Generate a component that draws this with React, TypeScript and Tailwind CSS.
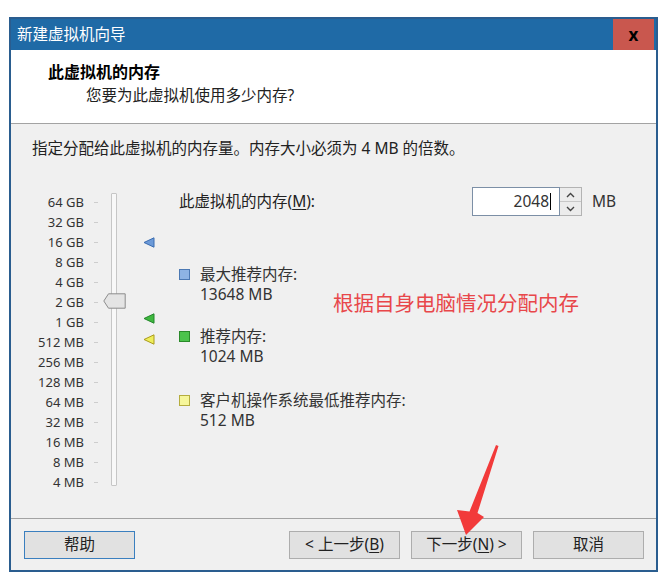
import React from "react";

const sizes = [
  "64 GB", "32 GB", "16 GB", "8 GB", "4 GB", "2 GB", "1 GB", "512 MB",
  "256 MB", "128 MB", "64 MB", "32 MB", "16 MB", "8 MB", "4 MB",
];

function Marker({ fill, stroke }: { fill: string; stroke: string }) {
  return (
    <svg width="12" height="11" viewBox="0 0 12 11">
      <path d="M1 5.5 L11 0.8 L11 10.2 Z" fill={fill} stroke={stroke} strokeWidth="1" strokeLinejoin="round" />
    </svg>
  );
}

function Legend({ color, border, title, value }: { color: string; border: string; title: string; value: string }) {
  return (
    <div className="flex">
      <div className="mt-[5px] h-[11px] w-[11px] border" style={{ background: color, borderColor: border }} />
      <div className="ml-[10px] text-[15.5px] leading-[20px] text-[#333]">
        <div>{title}</div>
        <div>{value}</div>
      </div>
    </div>
  );
}

function Button({ children, focus }: { children: React.ReactNode; focus?: boolean }) {
  return (
    <div
      className={
        "flex h-[28px] w-[111px] items-center justify-center border bg-[#e1e1e1] text-[15.5px] text-[#222] " +
        (focus ? "border-[#3a7fbf]" : "border-[#adadad]")
      }
    >
      {children}
    </div>
  );
}

export default function App() {
  return (
    <div className="relative min-h-screen bg-white pl-[9px] pt-[17px] font-['Noto_Sans','Noto_Sans_CJK_SC',sans-serif]">
      <div className="relative flex w-[649px] flex-col border-2 border-[#2a5d8f] bg-[#f0f0f0]">
        {/* title bar */}
        <div className="flex h-[31px] items-center justify-between bg-[#1f6aa6]">
          <span className="pl-[6px] text-[15.5px] text-white">新建虚拟机向导</span>
          <div className="mr-[2px] flex h-full w-[41px] items-center justify-center bg-[#c9574e] text-[17px] font-bold text-black">
            x
          </div>
        </div>

        {/* header */}
        <div className="h-[74px] border-b border-[#a3a3a3] bg-white">
          <div className="pl-[37px] pt-[12px] text-[16px] font-bold leading-[20px] text-black">此虚拟机的内存</div>
          <div className="mt-[3px] pl-[75px] text-[15.5px] leading-[20px] text-[#222]">您要为此虚拟机使用多少内存?</div>
        </div>

        {/* content */}
        <div className="h-[394px] pl-[21px] pt-[14px]">
          <div className="text-[15.5px] leading-[20px] text-[#222]">指定分配给此虚拟机的内存量。内存大小必须为 4 MB 的倍数。</div>

          <div className="mt-[29px] flex">
            <div className="flex pt-[5px]">
              <div className="w-[52px]">
                {sizes.map((s) => (
                  <div key={s} className="h-[20px] text-right text-[13px] leading-[20px] text-[#333]">
                    {s}
                  </div>
                ))}
              </div>
              <div className="ml-[10px] w-[5px]">
                {sizes.map((s) => (
                  <div key={s} className="flex h-[20px] items-center">
                    <div className="h-px w-[4px] bg-[#cdcdcd]" />
                  </div>
                ))}
              </div>
            </div>

            <div className="ml-[12px] w-[6px] pt-[6px]">
              <div className="relative h-[293px] w-[6px] rounded-[1px] border border-[#c6c6c6] bg-[#f8f8f8]">
                <svg className="absolute left-[-9px] top-[99px]" width="23" height="16" viewBox="0 0 23 16">
                  <path d="M0.8 8 L5.5 0.8 L22.2 0.8 L22.2 15.2 L5.5 15.2 Z" fill="#e4e4e4" stroke="#8c8c8c" strokeWidth="1" />
                </svg>
              </div>
            </div>

            <div className="ml-[26px] w-[12px] pt-[5px]">
              {sizes.map((s, i) => (
                <div key={s} className="flex h-[20px] items-center">
                  {i === 2 && <Marker fill="#6c9ad8" stroke="#3a6cb0" />}
                  {i === 6 && (
                    <div className="-translate-y-[4px]">
                      <Marker fill="#3fb83f" stroke="#23862a" />
                    </div>
                  )}
                  {i === 7 && (
                    <div className="-translate-y-[3px]">
                      <Marker fill="#eeee5a" stroke="#aa9a1c" />
                    </div>
                  )}
                </div>
              ))}
            </div>

            <div className="ml-[24px] flex flex-col">
              <div className="flex h-[29px] items-center">
                <div className="w-[293px] text-[15.5px] text-[#222]">
                  此虚拟机的内存(<span className="underline underline-offset-2">M</span>):
                </div>
                <div className="flex h-[29px] w-[88px] items-center justify-end border border-[#7c8fa6] bg-white pr-[8px] text-[15.5px] text-[#333]">
                  2048<span className="ml-[1px] inline-block h-[17px] w-px bg-black" />
                </div>
                <div className="flex h-[29px] w-[22px] flex-col border border-l-0 border-[#b3b3b3]">
                  <div className="flex flex-1 items-center justify-center border-b border-[#c8c8c8] bg-[#ececec]">
                    <svg width="9" height="6" viewBox="0 0 9 6">
                      <path d="M1 5 L4.5 1.5 L8 5" fill="none" stroke="#444" strokeWidth="1.4" />
                    </svg>
                  </div>
                  <div className="flex flex-1 items-center justify-center bg-[#ececec]">
                    <svg width="9" height="6" viewBox="0 0 9 6">
                      <path d="M1 1 L4.5 4.5 L8 1" fill="none" stroke="#444" strokeWidth="1.4" />
                    </svg>
                  </div>
                </div>
                <div className="ml-[10px] text-[15.5px] text-[#333]">MB</div>
              </div>

              <div className="mt-[48px]">
                <Legend color="#8db3e4" border="#4b78b3" title="最大推荐内存:" value="13648 MB" />
              </div>
              <div className="mt-[22px]">
                <Legend color="#4cc34c" border="#2a8a2a" title="推荐内存:" value="1024 MB" />
              </div>
              <div className="mt-[24px]">
                <Legend color="#f6f69a" border="#b5ad3e" title="客户机操作系统最低推荐内存:" value="512 MB" />
              </div>
            </div>
          </div>
        </div>

        {/* footer */}
        <div className="flex h-[52px] border-t border-[#a3a3a3] pl-[13px] pr-[12px] pt-[12px]">
          <div className="w-[110px]">
            <Button focus>帮助</Button>
          </div>
          <div className="flex-1" />
          <Button>
            &lt; 上一步(<span className="underline underline-offset-2">B</span>)
          </Button>
          <div className="ml-[11px]">
            <Button>
              下一步(<span className="underline underline-offset-2">N</span>) &gt;
            </Button>
          </div>
          <div className="ml-[11px]">
            <Button>取消</Button>
          </div>
        </div>

        {/* annotation */}
        <div className="absolute left-[322px] top-[272px] text-[20.5px] leading-[24px] text-[#e8474a]">
          根据自身电脑情况分配内存
        </div>
      </div>

      <svg className="pointer-events-none absolute left-0 top-0" width="671" height="586" viewBox="0 0 671 586">
        <path d="M496 445 L498.5 446 L477.5 513 L484 517 L466 535 L457 510 L469.5 511.5 Z" fill="#f23a3a" />
      </svg>
    </div>
  );
}
